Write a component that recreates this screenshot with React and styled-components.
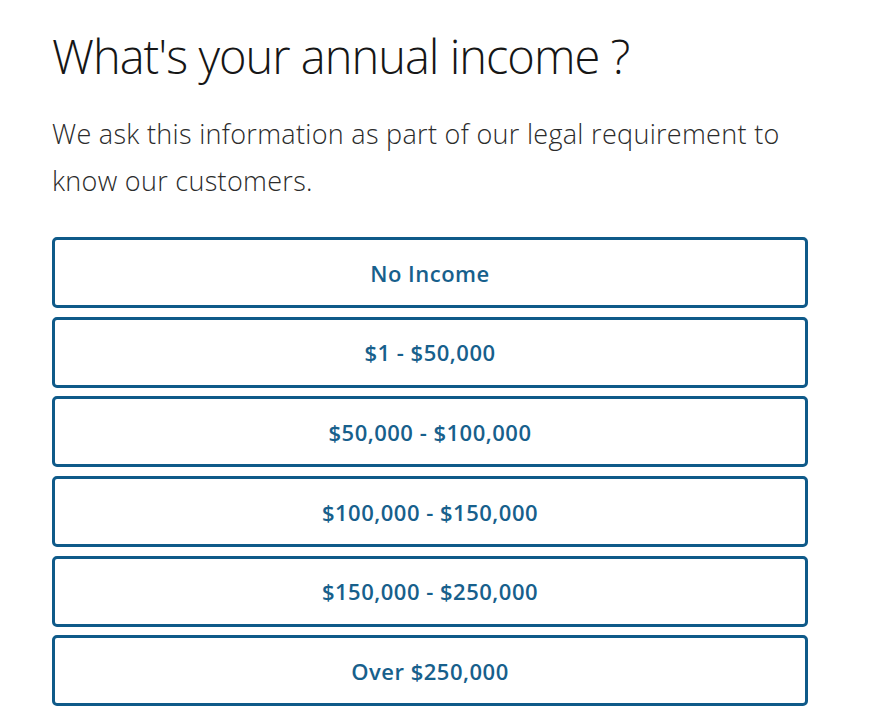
import { createGlobalStyle, styled } from "styled-components";

const GlobalStyle = createGlobalStyle`
  html, body {
    margin: 0;
    padding: 0;
    background: #ffffff;
  }
  body {
    font-family: "Open Sans", "Noto Sans", sans-serif;
  }
`;

const Page = styled.div`
  width: 876px;
  box-sizing: border-box;
  padding: 22px 68px 0 52px;
`;

const Title = styled.h1`
  margin: 0 0 20px;
  font-size: 47px;
  font-weight: 300;
  line-height: 68px;
  color: #161616;
  letter-spacing: -1px;
`;

const Intro = styled.p`
  margin: 0 0 33px;
  font-size: 27px;
  font-weight: 300;
  line-height: 47px;
  letter-spacing: 0.3px;
  color: #2b2b2b;
`;

const Options = styled.div`
  display: flex;
  flex-direction: column;
  gap: 8.7px;
  width: 756px;
`;

const Option = styled.button`
  height: 71px;
  box-sizing: border-box;
  border: 3px solid #0f5a89;
  border-radius: 5px;
  background: #ffffff;
  color: #17608c;
  font-family: "Open Sans", "Noto Sans", sans-serif;
  font-size: 22px;
  font-weight: 600;
  letter-spacing: 0.5px;
  cursor: pointer;
`;

const incomes = [
  "No Income",
  "$1 - $50,000",
  "$50,000 - $100,000",
  "$100,000 - $150,000",
  "$150,000 - $250,000",
  "Over $250,000",
];

const App = () => (
  <Page>
    <GlobalStyle />
    <Title>What's your annual income ?</Title>
    <Intro>
      We ask this information as part of our legal requirement to know our
      customers.
    </Intro>
    <Options>
      {incomes.map((label) => (
        <Option key={label}>{label}</Option>
      ))}
    </Options>
  </Page>
);

export default App;
